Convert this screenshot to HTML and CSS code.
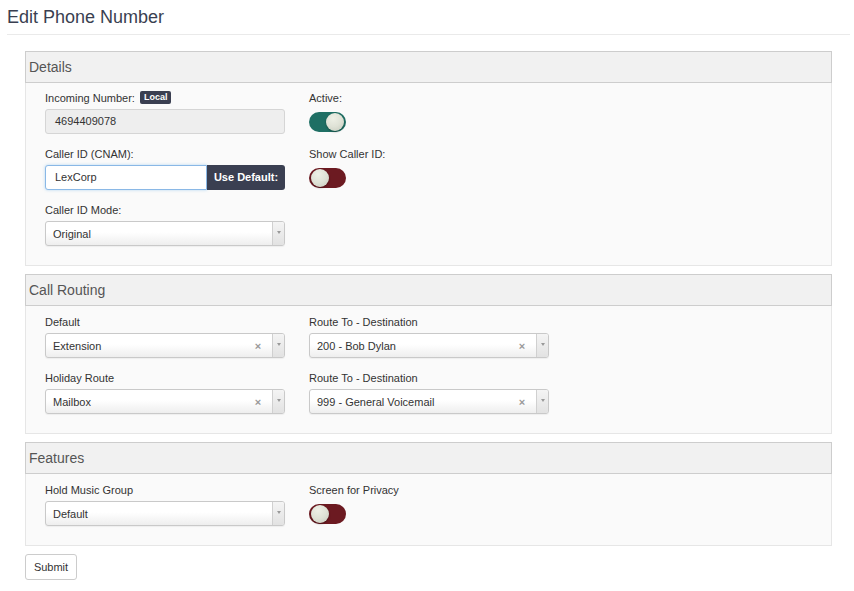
FILE: index.html
```html
<!DOCTYPE html>
<html>
<head>
<meta charset="utf-8">
<link rel="stylesheet" href="styles.css">
</head>
<body>
<div class="page">
  <h1 class="title">Edit Phone Number</h1>
  <div class="rule"></div>
  <form class="content">
    <section class="panel">
      <div class="panel-head">Details</div>
      <div class="panel-body">
        <div class="col">
          <div class="group">
            <label class="lbl">Incoming Number: <span class="badge">Local</span></label>
            <div class="input disabled">4694409078</div>
          </div>
          <div class="group">
            <label class="lbl">Caller ID (CNAM):</label>
            <div class="input-group">
              <div class="input focus">LexCorp</div>
              <div class="btn-dark">Use Default:</div>
            </div>
          </div>
          <div class="group">
            <label class="lbl">Caller ID Mode:</label>
            <div class="select"><span class="sel-text">Original</span><span class="sel-arrow"><i></i></span></div>
          </div>
        </div>
        <div class="col">
          <div class="group">
            <label class="lbl">Active:</label>
            <div class="toggle-wrap"><div class="toggle on"><span class="knob"></span></div></div>
          </div>
          <div class="group">
            <label class="lbl">Show Caller ID:</label>
            <div class="toggle-wrap"><div class="toggle off"><span class="knob"></span></div></div>
          </div>
        </div>
      </div>
    </section>

    <section class="panel">
      <div class="panel-head">Call Routing</div>
      <div class="panel-body">
        <div class="col">
          <div class="group">
            <label class="lbl">Default</label>
            <div class="select"><span class="sel-text">Extension</span><span class="sel-clear">×</span><span class="sel-arrow"><i></i></span></div>
          </div>
          <div class="group">
            <label class="lbl">Holiday Route</label>
            <div class="select"><span class="sel-text">Mailbox</span><span class="sel-clear">×</span><span class="sel-arrow"><i></i></span></div>
          </div>
        </div>
        <div class="col">
          <div class="group">
            <label class="lbl">Route To - Destination</label>
            <div class="select"><span class="sel-text">200 - Bob Dylan</span><span class="sel-clear">×</span><span class="sel-arrow"><i></i></span></div>
          </div>
          <div class="group">
            <label class="lbl">Route To - Destination</label>
            <div class="select"><span class="sel-text">999 - General Voicemail</span><span class="sel-clear">×</span><span class="sel-arrow"><i></i></span></div>
          </div>
        </div>
      </div>
    </section>

    <section class="panel">
      <div class="panel-head">Features</div>
      <div class="panel-body">
        <div class="col">
          <div class="group">
            <label class="lbl">Hold Music Group</label>
            <div class="select"><span class="sel-text">Default</span><span class="sel-arrow"><i></i></span></div>
          </div>
        </div>
        <div class="col">
          <div class="group">
            <label class="lbl">Screen for Privacy</label>
            <div class="toggle-wrap"><div class="toggle off"><span class="knob"></span></div></div>
          </div>
        </div>
      </div>
    </section>

    <div class="actions"><button type="button" class="btn">Submit</button></div>
  </form>
</div>
</body>
</html>
```

FILE: styles.css
```css
* { box-sizing: border-box; }
html, body { margin: 0; padding: 0; background: #fff; }
body {
  font-family: "Liberation Sans", Arial, Helvetica, sans-serif;
  color: #333;
  font-size: 12px;
  width: 854px;
  height: 591px;
  overflow: hidden;
}
.page { padding: 0 0 0 7px; }
.title {
  margin: 0;
  padding-top: 6px;
  font-size: 18px;
  line-height: 22px;
  font-weight: normal;
  color: #3a3f51;
}
.rule {
  margin-top: 6px;
  height: 1px;
  background: #eaeaea;
  width: 843px;
}
.content {
  margin: 16px 0 0 18px;
  width: 807px;
}
.panel { margin-bottom: 8px; }
.panel-head {
  height: 32px;
  background: #f1f1f1;
  border: 1px solid #cdcdcd;
  padding: 0 0 0 3px;
  font-size: 14px;
  line-height: 30px;
  color: #555;
}
.panel-body {
  background: #fafafa;
  border: 1px solid #e6e6e6;
  border-top: none;
  display: grid;
  grid-template-columns: 240px 240px;
  column-gap: 24px;
  padding: 8px 0 6px 19px;
}
.panel + .panel .panel-body { padding-top: 9px; }
.group { margin-bottom: 13px; }
.lbl {
  display: block;
  height: 14px;
  line-height: 14px;
  margin-bottom: 4px;
  font-size: 11px;
  color: #333;
}
.badge {
  display: inline-block;
  background: #3a3f51;
  color: #fff;
  font-weight: bold;
  font-size: 9px;
  line-height: 13px;
  height: 13px;
  padding: 0 4px;
  border-radius: 2px;
  vertical-align: top;
  margin-left: 2px;
}
.input {
  height: 25px;
  border: 1px solid #ccc;
  border-radius: 3px;
  background: #fff;
  padding: 0 9px;
  line-height: 23px;
  font-size: 11px;
  color: #333;
}
.input.disabled { background: #eee; border-color: #d5d5d5; }
.input-group { display: flex; height: 25px; }
.input-group .input.focus {
  flex: 1;
  border-color: #8ab8e6;
  border-radius: 3px 0 0 3px;
  box-shadow: 0 0 3px rgba(102, 175, 233, 0.5);
}
.btn-dark {
  width: 78px;
  background: #3a3f51;
  color: #fff;
  font-weight: bold;
  font-size: 11px;
  line-height: 25px;
  text-align: center;
  border-radius: 0 3px 3px 0;
}
.select {
  display: flex;
  align-items: center;
  height: 25px;
  border: 1px solid #c9c9c9;
  border-radius: 3px;
  background: linear-gradient(#ffffff 0%, #ffffff 45%, #eeeeee 100%);
  font-size: 11px;
  color: #333;
  box-shadow: 0 1px 1px rgba(0,0,0,0.05);
}
.sel-text { flex: 1; padding-left: 7px; }
.sel-clear {
  width: 12px;
  font-size: 11px;
  color: #999;
  text-align: center;
  font-weight: bold;
  margin-right: 8px;
}
.sel-arrow {
  width: 12px;
  align-self: stretch;
  border-left: 1px solid #d0d0d0;
  background: linear-gradient(#f4f4f4, #e2e2e2);
  border-radius: 0 2px 2px 0;
  display: flex;
  align-items: center;
  justify-content: center;
}
.sel-arrow i {
  display: block;
  width: 0; height: 0;
  border-left: 2.5px solid transparent;
  border-right: 2.5px solid transparent;
  border-top: 3px solid #999;
  margin-top: -2px;
}
.toggle-wrap { height: 25px; padding-top: 3px; }
.toggle {
  position: relative;
  width: 37px;
  height: 20px;
  border-radius: 10px;
}
.toggle.on { background: #1f6f64; }
.toggle.off { background: #6c1a21; }
.knob {
  position: absolute;
  top: 1px;
  width: 18px;
  height: 18px;
  border-radius: 50%;
  background: radial-gradient(circle at 40% 30%, #eef0e6 0%, #dfe2d6 50%, #c5c9bc 100%);
  box-shadow: 0 1px 2px rgba(0,0,0,0.35);
}
.toggle.on .knob { right: 2px; }
.toggle.off .knob { left: 2px; }
.btn {
  font-family: "Liberation Sans", Arial, Helvetica, sans-serif;
  font-size: 11px;
  color: #333;
  background: #fff;
  border: 1px solid #ccc;
  border-radius: 3px;
  height: 26px;
  width: 52px;
  padding: 0;
  margin: 0;
}
```
